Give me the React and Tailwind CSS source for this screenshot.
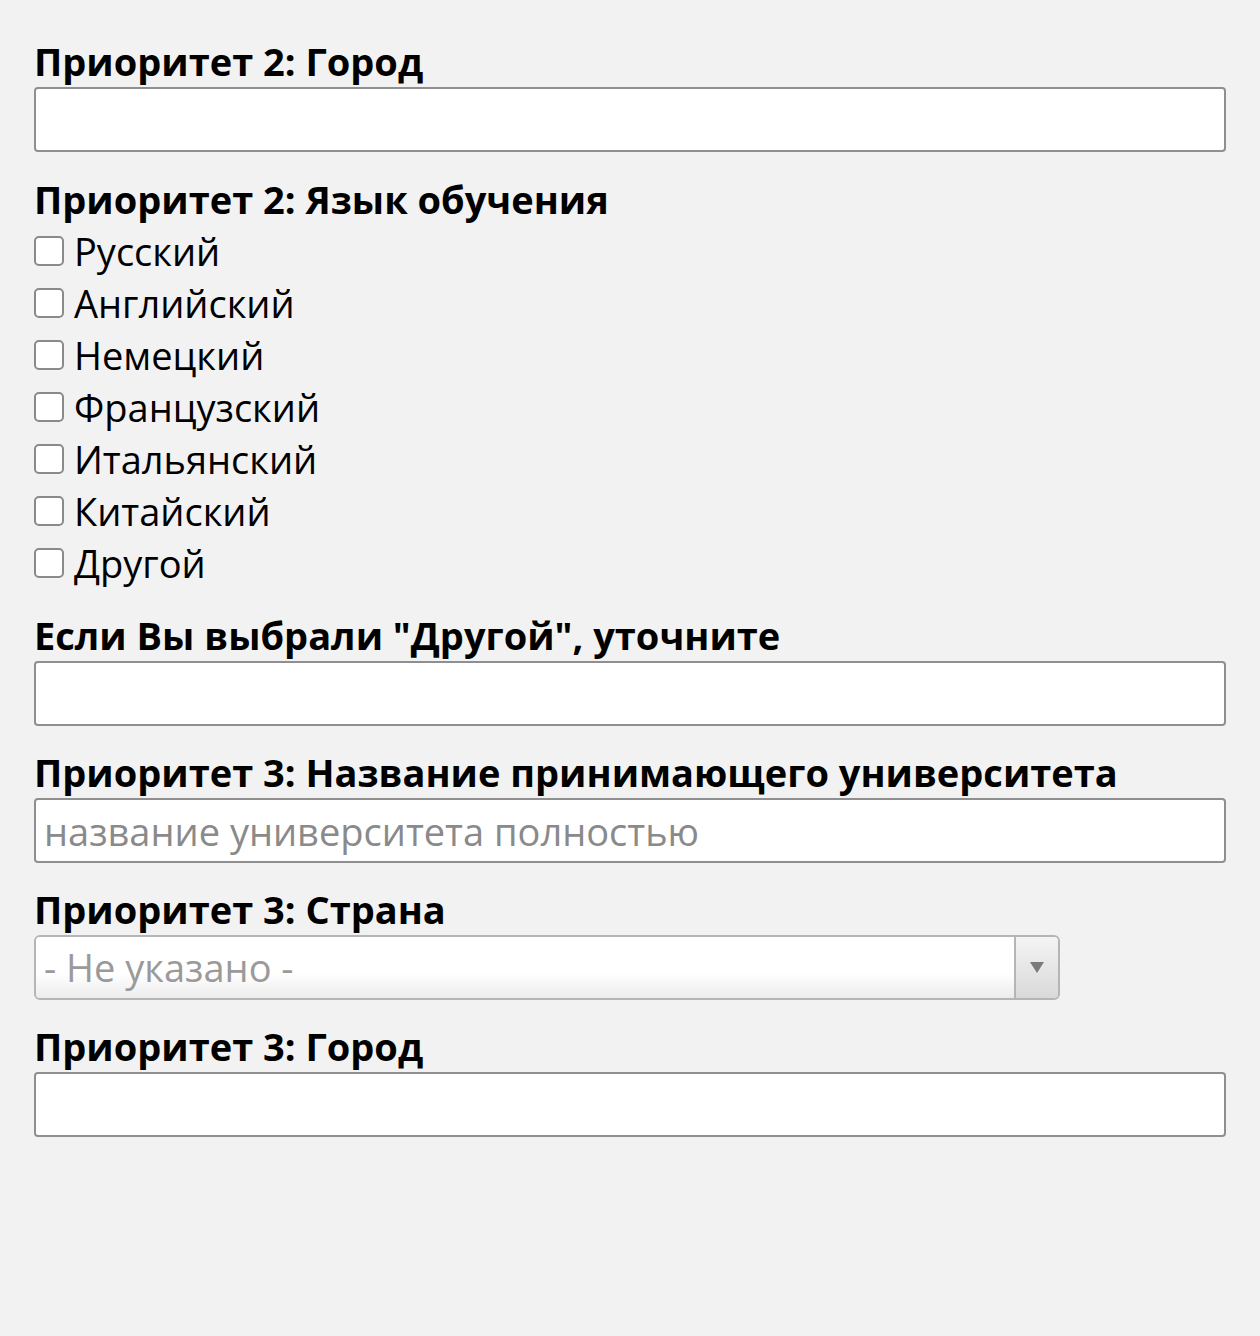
import React from 'react';

const font = { fontFamily: '"Open Sans", "Noto Sans", sans-serif' };

const Label = ({ children }) => (
    <label className="block text-[38px] font-bold leading-[44px] text-black mb-[4px]">{children}</label>
);

const TextInput = ({ placeholder }) => (
    <input
        type="text"
        placeholder={placeholder}
        className="block w-full h-[65px] bg-white border-2 border-[#8f8f8f] rounded-[4px] px-[8px] text-[38px] text-black placeholder:text-[#8a8a8a] outline-none"
    />
);

const languages = ['Русский', 'Английский', 'Немецкий', 'Французский', 'Итальянский', 'Китайский', 'Другой'];

export default function App() {
    return (
        <div style={font} className="min-h-[1336px] w-[1260px] bg-[#f2f2f2] px-[34px] pt-[39px]">
            <div className="mb-[25px]">
                <Label>Приоритет 2: Город</Label>
                <TextInput />
            </div>

            <div className="mb-[24px]">
                <Label>Приоритет 2: Язык обучения</Label>
                <div className="flex flex-col">
                    {languages.map((lang) => (
                        <label key={lang} className="flex items-center h-[52px] text-[38px] text-black">
                            <span className="w-[30px] h-[30px] rounded-[5px] border-2 border-[#8a8a8a] bg-white mr-[10px] shrink-0" />
                            {lang}
                        </label>
                    ))}
                </div>
            </div>

            <div className="mb-[24px]">
                <Label>Если Вы выбрали "Другой", уточните</Label>
                <TextInput />
            </div>

            <div className="mb-[24px]">
                <Label>Приоритет 3: Название принимающего университета</Label>
                <TextInput placeholder="название университета полностью" />
            </div>

            <div className="mb-[24px]">
                <Label>Приоритет 3: Страна</Label>
                <div className="flex w-[1026px] h-[65px] rounded-[6px] border-2 border-[#b5b5b5] overflow-hidden">
                    <div className="flex-1 flex items-center px-[8px] text-[38px] text-[#9a9a9a] bg-gradient-to-b from-white from-60% to-[#ececec]">
                        - Не указано -
                    </div>
                    <div className="w-[44px] flex items-center justify-center border-l-2 border-[#b5b5b5] bg-gradient-to-b from-[#f4f4f4] to-[#d9d9d9]">
                        <svg width="14" height="11" viewBox="0 0 14 11"><path d="M0 0h14L7 11z" fill="#7a7a7a" /></svg>
                    </div>
                </div>
            </div>

            <div>
                <Label>Приоритет 3: Город</Label>
                <TextInput />
            </div>
        </div>
    );
}
